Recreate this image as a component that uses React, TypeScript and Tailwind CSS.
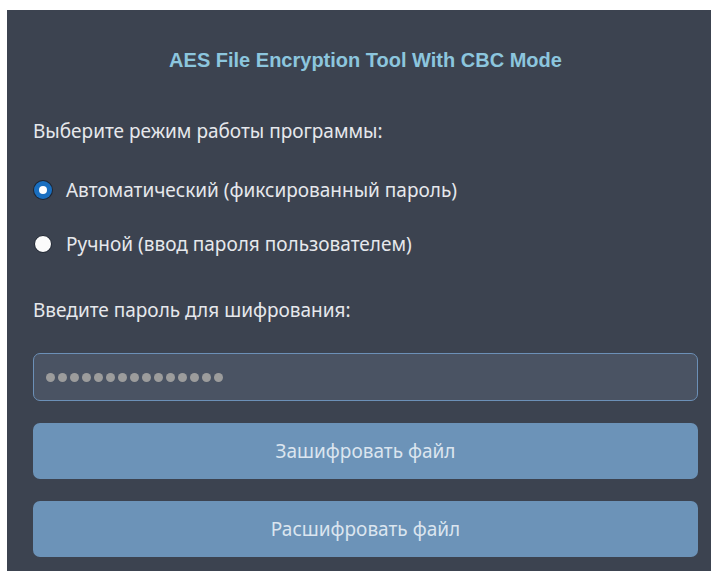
import React, { useState } from 'react';

type Mode = 'auto' | 'manual';

const RadioOption: React.FC<{
  label: string;
  checked: boolean;
  onSelect: () => void;
}> = ({ label, checked, onSelect }) => {
  return (
    <label className="flex h-[54px] cursor-pointer items-center gap-[14px] pl-[1px]" onClick={onSelect}>
      {checked ? (
        <span className="flex h-[18px] w-[18px] shrink-0 items-center justify-center rounded-full bg-[#1a6fc0] ring-1 ring-[#1d2634]">
          <span className="h-[8px] w-[8px] rounded-full bg-white" />
        </span>
      ) : (
        <span className="h-[18px] w-[18px] shrink-0 rounded-full border border-[#1d2430] bg-[#fbfbfb]" />
      )}
      <span>{label}</span>
    </label>
  );
};

export default function App() {
  const [mode, setMode] = useState<Mode>('auto');

  return (
    <div className="h-[571px] w-[711px] bg-white pl-[7px] pt-[10px]">
      <div
        className="flex h-full flex-col bg-[#3c4350] pl-[26px] pr-[13px] text-[19px] text-[#e6e8ec]"
        style={{ fontFamily: '"Noto Sans", "Open Sans", sans-serif' }}
      >
        <h1 className="flex h-[100px] items-center justify-center text-[20px] font-bold text-[#8cc6de] font-['Liberation_Sans',Arial,sans-serif]">
          AES File Encryption Tool With CBC Mode
        </h1>

        <p className="flex h-[42px] items-center">Выберите режим работы программы:</p>

        <div className="mt-[11px] flex flex-col">
          <RadioOption
            label="Автоматический (фиксированный пароль)"
            checked={mode === 'auto'}
            onSelect={() => setMode('auto')}
          />
          <RadioOption
            label="Ручной (ввод пароля пользователем)"
            checked={mode === 'manual'}
            onSelect={() => setMode('manual')}
          />
        </div>

        <p className="mt-[18px] flex h-[42px] items-center">Введите пароль для шифрования:</p>

        <div className="mt-[22px] flex h-[48px] shrink-0 items-center rounded-[7px] border border-[#6c90b7] bg-[#4a5363] pl-[12px]">
          <div className="flex gap-[3px]">
            {Array.from({ length: 15 }).map((_, i) => (
              <span key={i} className="h-[9px] w-[9px] rounded-full bg-[#9c9c9c]" />
            ))}
          </div>
        </div>

        <button className="mt-[22px] h-[56px] shrink-0 rounded-[7px] bg-[#6c93b8] text-[19px] text-[#dbe5ef]">
          Зашифровать файл
        </button>
        <button className="mt-[22px] h-[56px] shrink-0 rounded-[7px] bg-[#6c93b8] text-[19px] text-[#dbe5ef]">
          Расшифровать файл
        </button>
      </div>
    </div>
  );
}
